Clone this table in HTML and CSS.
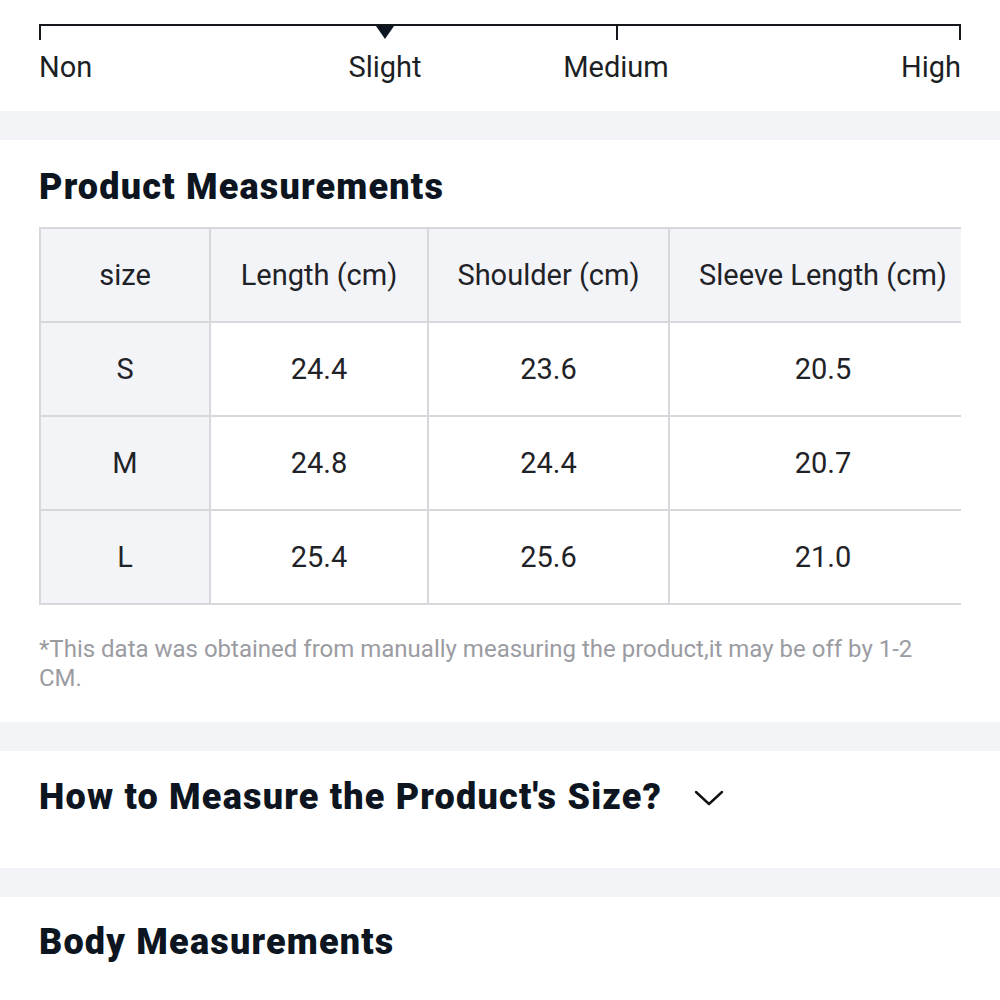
FILE: index.html
```html
<!DOCTYPE html>
<html lang="en">
<head>
<meta charset="utf-8">
<title>Size info</title>
<link rel="stylesheet" href="styles.css">
</head>
<body>
<section class="card card-stretch">
  <div class="scale">
    <div class="seg seg-a"></div>
    <div class="seg seg-b"><span class="marker"></span></div>
    <div class="seg seg-c"></div>
  </div>
  <div class="scale-labels">
    <span class="lbl lbl-non">Non</span>
    <span class="lbl lbl-slight">Slight</span>
    <span class="lbl lbl-medium">Medium</span>
    <span class="lbl lbl-high">High</span>
  </div>
</section>

<section class="card card-measure">
  <h2 class="title">Product Measurements</h2>
  <div class="table-wrap">
    <table class="size-table">
      <thead>
        <tr>
          <th class="c1">size</th>
          <th class="c2">Length (cm)</th>
          <th class="c3">Shoulder (cm)</th>
          <th class="c4">Sleeve Length (cm)</th>
        </tr>
      </thead>
      <tbody>
        <tr><th>S</th><td>24.4</td><td>23.6</td><td>20.5</td></tr>
        <tr><th>M</th><td>24.8</td><td>24.4</td><td>20.7</td></tr>
        <tr><th>L</th><td>25.4</td><td>25.6</td><td>21.0</td></tr>
      </tbody>
    </table>
  </div>
  <p class="note">*This data was obtained from manually measuring the product,it may be off by 1-2 CM.</p>
</section>

<section class="card card-how">
  <h2 class="title title-row">How to Measure the Product's Size?
    <svg class="chev" width="30" height="18" viewBox="0 0 30 18" aria-hidden="true"><path d="M2 3 L15 15 L28 3" fill="none" stroke="#111" stroke-width="2.4" stroke-linecap="round" stroke-linejoin="round"/></svg>
  </h2>
</section>

<section class="card card-body">
  <h2 class="title">Body Measurements</h2>
</section>
</body>
</html>
```

FILE: styles.css
```css
html, body {
  margin: 0;
  padding: 0;
}
body {
  background: #f3f4f7;
  font-family: Roboto, "Liberation Sans", Arial, sans-serif;
  color: #1c1f24;
  display: flex;
  flex-direction: column;
  gap: 29px;
  min-height: 1000px;
}
.card {
  background: #fff;
  padding: 0 39px;
}

/* stretch scale */
.card-stretch {
  padding-top: 24px;
  padding-bottom: 27px;
}
.scale {
  display: grid;
  grid-template-columns: 346px 231px 1fr;
  height: 16px;
}
.seg {
  border-top: 2px solid #14171c;
  position: relative;
}
.seg-a { border-left: 2px solid #14171c; }
.seg-c { border-left: 2px solid #14171c; border-right: 2px solid #14171c; }
.marker {
  position: absolute;
  left: -9px;
  top: 0;
  width: 0;
  height: 0;
  border-left: 9px solid transparent;
  border-right: 9px solid transparent;
  border-top: 13px solid #0d1520;
}
.scale-labels {
  display: grid;
  grid-template-columns: 346px 231px 1fr;
  margin-top: 10px;
  font-size: 29px;
  line-height: 34px;
  color: #1c1f24;
}
.lbl { grid-row: 1; white-space: nowrap; }
.lbl-non { grid-column: 1; justify-self: start; }
.lbl-slight { grid-column: 2; justify-self: start; transform: translateX(-50%); }
.lbl-medium { grid-column: 3; justify-self: start; transform: translateX(-50%); }
.lbl-high { grid-column: 3; justify-self: end; }

/* headings */
.title {
  margin: 0;
  font-size: 36px;
  line-height: 40px;
  font-weight: 900;
  color: #0d1520;
  letter-spacing: 1.2px;
}

/* measurements */
.card-measure {
  padding-top: 27px;
  padding-bottom: 29px;
}
.table-wrap {
  margin-top: 20px;
  overflow: hidden;
  width: 922px;
}
.size-table {
  border-collapse: collapse;
  table-layout: fixed;
  width: 939px;
  font-size: 29px;
  color: #1f2227;
}
.size-table th,
.size-table td {
  border: 2px solid #d7d8dc;
  height: 92px;
  padding: 0;
  text-align: center;
  vertical-align: middle;
  font-weight: 400;
}
.size-table thead th {
  background: #f3f4f8;
}
.size-table tbody th {
  background: #f3f4f8;
}
.size-table td { background: #fff; }
.c1 { width: 168px; }
.c2 { width: 216px; }
.c3 { width: 239px; }
.c4 { width: 306px; }

.note {
  margin: 30px 0 0;
  font-size: 24px;
  line-height: 29px;
  letter-spacing: 0;
  color: #9b9ca2;
}

/* how to */
.card-how {
  padding-top: 26px;
  padding-bottom: 51px;
}
.title-row {
  display: flex;
  align-items: center;
  gap: 32px;
}
.chev { display: block; margin-top: 2px; }

.card-body {
  padding-top: 25px;
  flex: 1;
}
```
